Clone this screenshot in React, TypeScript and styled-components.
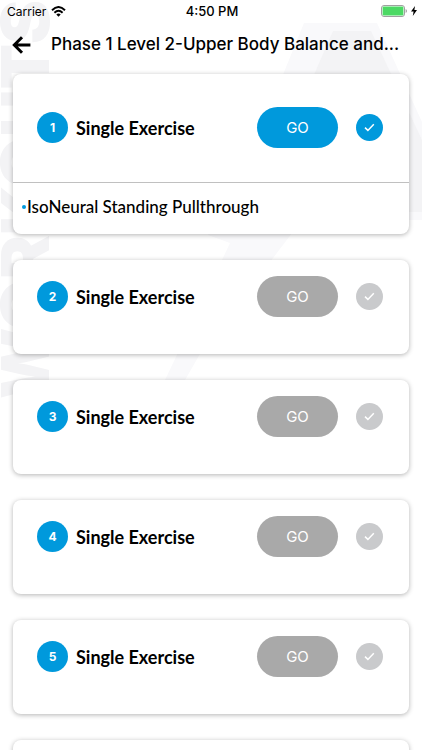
import React from "react";
import styled, { createGlobalStyle } from "styled-components";

const GlobalStyle = createGlobalStyle`
  * { box-sizing: border-box; }
  body { margin: 0; background: #fff; color: #000; font-family: Inter, "Liberation Sans", sans-serif; }
`;

const Screen = styled.div`
  position: relative;
  height: 100vh;
  overflow: hidden;
  background: #fff;
`;

const Backdrop = styled.svg`
  position: absolute;
  top: 0;
  right: 0;
`;

const Watermark = styled.div`
  position: absolute;
  top: 0;
  left: 0;
  writing-mode: vertical-rl;
  transform: rotate(180deg);
  font-size: 66px;
  line-height: 50px;
  font-weight: 900;
  color: #f3f3f5;
  user-select: none;
`;

const Content = styled.div`
  position: relative;
  display: flex;
  flex-direction: column;
  height: 100%;
`;

const StatusBar = styled.div`
  display: grid;
  flex: none;
  grid-template-columns: 1fr auto 1fr;
  align-items: center;
  height: 22px;
  padding: 0 5px 0 7px;
  font-size: 12px;
`;

const StatusGroup = styled.div<{ $end?: boolean }>`
  display: flex;
  align-items: center;
  justify-content: ${(p) => (p.$end ? "flex-end" : "flex-start")};
  gap: ${(p) => (p.$end ? 4 : 5)}px;
`;

const Clock = styled.span`
  font-size: 13px;
  font-weight: 500;
`;

const Header = styled.header`
  display: flex;
  flex: none;
  align-items: center;
  gap: 20px;
  height: 43px;
  padding: 0 12px;
`;

const BackButton = styled.button`
  display: flex;
  padding: 2px 0 0;
  border: 0;
  background: none;
`;

const PageTitle = styled.h1`
  flex: 1;
  min-width: 0;
  margin: 0;
  overflow: hidden;
  text-overflow: ellipsis;
  white-space: nowrap;
  font-size: 17px;
  line-height: 24px;
  font-weight: 500;
`;

const List = styled.main`
  display: flex;
  flex: 1;
  flex-direction: column;
  gap: 26px;
  min-height: 0;
  padding: 9px 13px 26px;
  overflow-y: auto;
  scrollbar-width: none;
`;

const Card = styled.section`
  flex: none;
  border-radius: 8px;
  background: #fff;
  box-shadow: 0 1px 5px rgba(0, 0, 0, 0.3);
`;

const Row = styled.div<{ $open: boolean }>`
  display: flex;
  align-items: center;
  padding: ${(p) => (p.$open ? "33px 26px 34px 24px" : "16px 26px 37px 24px")};
`;

const Badge = styled.span`
  display: flex;
  align-items: center;
  justify-content: center;
  width: 31px;
  height: 31px;
  border-radius: 50%;
  background: #0099dc;
  color: #fff;
  font-size: 12px;
  font-weight: 700;
`;

const Name = styled.h2`
  flex: 1;
  margin: 0 0 0 8px;
  font-family: Lato, "Liberation Sans", sans-serif;
  font-size: 18px;
  line-height: 24px;
  font-weight: 700;
`;

const GoButton = styled.button`
  width: 81px;
  height: 41px;
  margin-right: 18px;
  padding: 0;
  border: 0;
  border-radius: 21px;
  background: #0099dc;
  color: #fff;
  font-family: inherit;
  font-size: 15px;
  font-weight: 400;
  &:disabled { background: #a9a9a9; }
`;

const Check = styled.button`
  display: flex;
  align-items: center;
  justify-content: center;
  width: 27px;
  height: 27px;
  padding: 0;
  border: 0;
  border-radius: 50%;
  background: #0099dc;
  &:disabled { background: #c9cacc; }
`;

const Details = styled.ul`
  margin: 0;
  padding: 12px 9px 15px;
  border-top: 1px solid #c0c0c0;
  list-style: none;
`;

const DetailItem = styled.li`
  display: flex;
  align-items: center;
  gap: 1px;
  font-family: Lato, "Liberation Sans", sans-serif;
  font-size: 17px;
  line-height: 24px;
  font-weight: 500;
  &::before {
    content: "";
    width: 4px;
    height: 4px;
    border-radius: 50%;
    background: #0099dc;
  }
`;

const exercises = [
  { id: 1, name: "Single Exercise", details: ["IsoNeural Standing Pullthrough"] },
  { id: 2, name: "Single Exercise", details: [] },
  { id: 3, name: "Single Exercise", details: [] },
  { id: 4, name: "Single Exercise", details: [] },
  { id: 5, name: "Single Exercise", details: [] },
  { id: 6, name: "Single Exercise", details: [] },
];

function ExerciseCard({ id, name, details }: { id: number; name: string; details: string[] }) {
  const open = details.length > 0;
  return (
    <Card>
      <Row $open={open}>
        <Badge>{id}</Badge>
        <Name>{name}</Name>
        <GoButton disabled={!open}>GO</GoButton>
        <Check disabled={!open} aria-label={`Mark exercise ${id} complete`}>
          <svg width="11" height="9" viewBox="0 0 11 9" fill="none" stroke="#fff" strokeWidth="1.5">
            <path d="M1 4.6 3.9 7.4 9.8 1.2" />
          </svg>
        </Check>
      </Row>
      {open && (
        <Details>
          {details.map((d) => (
            <DetailItem key={d}>{d}</DetailItem>
          ))}
        </Details>
      )}
    </Card>
  );
}

export default function App() {
  return (
    <Screen>
      <GlobalStyle />
      <Backdrop width="422" height="400" viewBox="0 0 422 400" aria-hidden="true">
        <path d="M304 23H377L422 122V220H302L200 354 185 380H165L222 260 230 243 208 235 240 180Z" fill="#f9f9fb" />
        <path d="M333 31H371L422 140V212H370L340 130H290Z" fill="#f3f3f5" />
      </Backdrop>
      <Watermark aria-hidden="true">WORKOUTS</Watermark>
      <Content>
        <StatusBar>
          <StatusGroup>
            <span>Carrier</span>
            <svg width="15" height="11" viewBox="0 0 15 11" fill="none" stroke="#000" strokeWidth="1.9" aria-label="Wi-Fi">
              <path d="M1 4.2Q7.5-2.2 14 4.2" />
              <path d="M3.4 6.7Q7.5 2.8 11.6 6.7" />
              <path d="M5.3 8.6Q7.5 6.6 9.7 8.6L7.5 10.8Z" fill="#000" stroke="none" />
            </svg>
          </StatusGroup>
          <Clock>4:50 PM</Clock>
          <StatusGroup $end>
            <svg width="26" height="12" viewBox="0 0 26 12" aria-label="Battery charging">
              <rect x=".5" y=".5" width="23" height="11" rx="2.5" fill="#fff" stroke="#a0a0a0" />
              <rect x="1.6" y="1.6" width="20.8" height="8.8" rx="1.2" fill="#4cd964" />
              <path d="M24.6 4Q26 4.4 26 6T24.6 8Z" fill="#a0a0a0" />
            </svg>
            <svg width="6" height="10" viewBox="0 0 6 10" aria-hidden="true">
              <path d="M4 0 0 5.6H2.6L1.8 10 6 4.1H3.4Z" />
            </svg>
          </StatusGroup>
        </StatusBar>
        <Header>
          <BackButton aria-label="Back">
            <svg width="19" height="18" viewBox="0 0 19 18" fill="none" stroke="#000" strokeWidth="3">
              <path d="M18.4 9H2.5M10 1.3 2.3 9 10 16.7" />
            </svg>
          </BackButton>
          <PageTitle>Phase 1 Level 2-Upper Body Balance and...</PageTitle>
        </Header>
        <List>
          {exercises.map((e) => (
            <ExerciseCard key={e.id} {...e} />
          ))}
        </List>
      </Content>
    </Screen>
  );
}
